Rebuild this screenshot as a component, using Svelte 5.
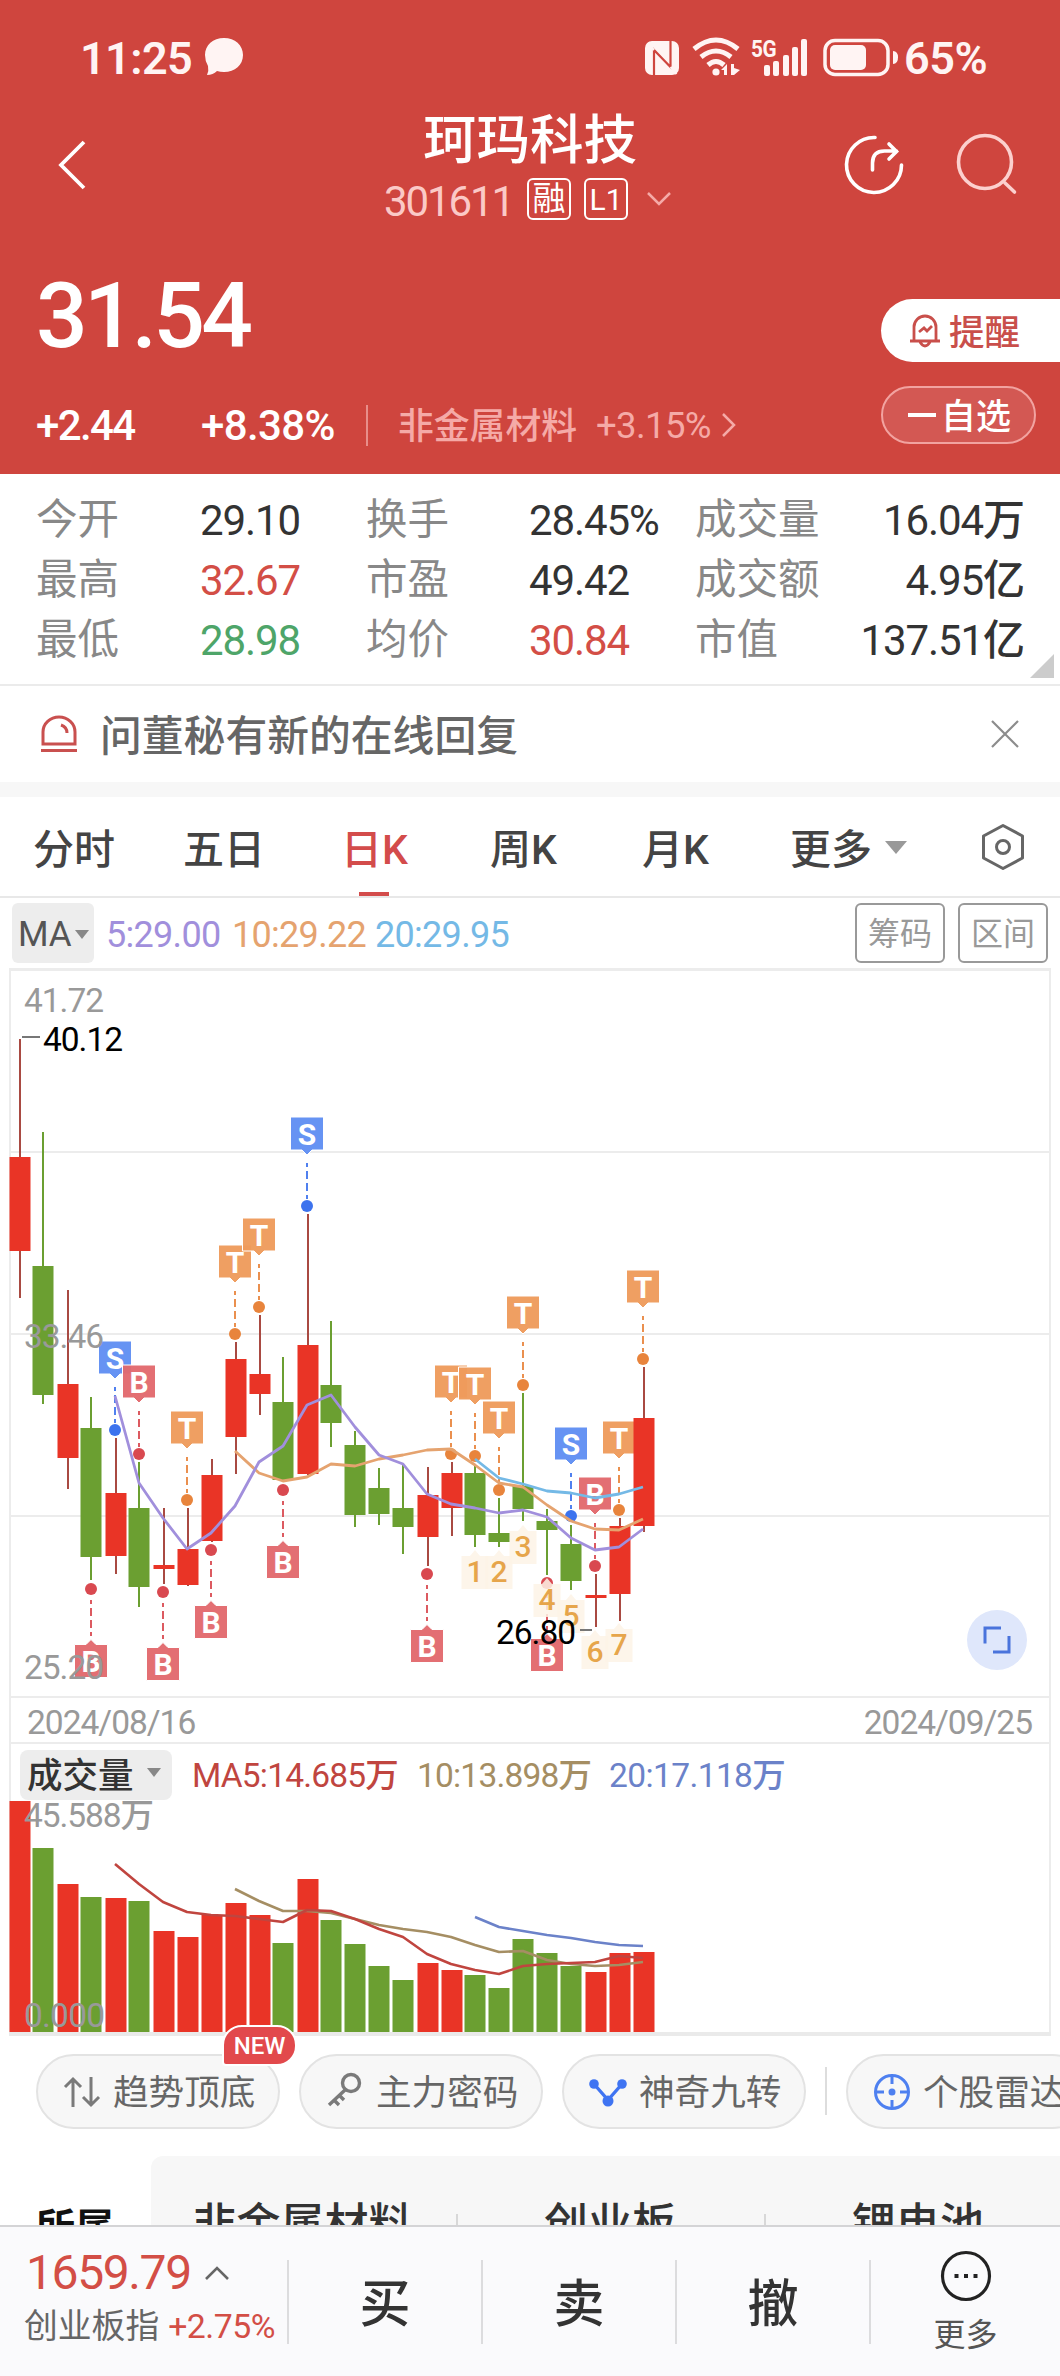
<script lang="ts">
	type Candle = [x: number, high: number, top: number, bottom: number, low: number, up: 0 | 1];
	type Point = [number, number];

	interface Marker {
		x: number;
		y: number;
		kind: 'S' | 'B' | 'T';
		below?: boolean;
	}

	const stats = [
		{ label: '今开', value: '29.10' },
		{ label: '换手', value: '28.45%' },
		{ label: '成交量', value: '16.04万' },
		{ label: '最高', value: '32.67', tone: 'rise' },
		{ label: '市盈', value: '49.42' },
		{ label: '成交额', value: '4.95亿' },
		{ label: '最低', value: '28.98', tone: 'fall' },
		{ label: '均价', value: '30.84', tone: 'rise' },
		{ label: '市值', value: '137.51亿' }
	];

	const tabs = ['分时', '五日', '日K', '周K', '月K'];
	let active = $state('日K');

	const candles: Candle[] = [
		[20, 1039, 1157, 1251, 1298, 1],
		[43, 1132, 1266, 1395, 1404, 0],
		[68, 1290, 1384, 1458, 1489, 1],
		[91, 1397, 1428, 1557, 1580, 0],
		[116, 1438, 1493, 1556, 1574, 1],
		[139, 1462, 1508, 1587, 1607, 0],
		[164, 1508, 1565, 1569, 1584, 1],
		[188, 1508, 1549, 1585, 1586, 1],
		[212, 1459, 1475, 1541, 1542, 1],
		[236, 1342, 1359, 1437, 1474, 1],
		[260, 1315, 1374, 1394, 1415, 1],
		[283, 1357, 1402, 1480, 1480, 0],
		[308, 1214, 1345, 1474, 1475, 1],
		[331, 1321, 1385, 1423, 1447, 0],
		[355, 1431, 1445, 1515, 1527, 0],
		[379, 1468, 1488, 1514, 1525, 0],
		[403, 1465, 1508, 1527, 1554, 0],
		[428, 1467, 1495, 1537, 1566, 1],
		[452, 1462, 1473, 1508, 1536, 1],
		[475, 1464, 1473, 1535, 1547, 0],
		[499, 1498, 1533, 1542, 1547, 0],
		[523, 1393, 1486, 1509, 1521, 0],
		[547, 1509, 1521, 1530, 1575, 0],
		[571, 1525, 1544, 1581, 1590, 0],
		[596, 1574, 1595, 1598, 1627, 1],
		[620, 1518, 1526, 1594, 1621, 1],
		[644, 1367, 1418, 1526, 1532, 1]
	];

	// Top edge of each volume bar
	const volumes = [
		1801, 1848, 1884, 1897, 1898, 1901, 1931, 1937, 1915, 1903, 1915, 1943, 1879, 1920,
		1944, 1966, 1980, 1963, 1970, 1975, 1988, 1939, 1953, 1966, 1972, 1953, 1952
	];
	const VOL_BASE = 2032;

	const STEP = 24;
	const series = (from: number, ys: number[]): Point[] => ys.map((y, i) => [from + i * STEP, y]);
	const toPoints = (pts: Point[]) => pts.map((p) => p.join(',')).join(' ');

	const ma5 = series(115, [
		1396, 1483, 1518, 1549, 1533, 1506, 1462, 1446, 1405, 1395, 1427, 1455, 1464, 1494,
		1504, 1508, 1513, 1510, 1517, 1538, 1550, 1547, 1529
	]);
	const ma10 = series(235, [
		1451, 1473, 1481, 1477, 1464, 1466, 1459, 1455, 1450, 1449, 1465, 1483, 1487, 1505,
		1521, 1529, 1530, 1519
	]);
	const ma20 = series(475, [1459, 1478, 1484, 1491, 1493, 1498, 1494, 1487]);

	const vol5 = series(115, [
		1864, 1884, 1902, 1912, 1915, 1916, 1919, 1922, 1910, 1911, 1919, 1929, 1937, 1954,
		1964, 1970, 1974, 1966, 1964, 1963, 1962, 1956, 1958
	]);
	const vol10 = series(235, [
		1889, 1901, 1911, 1911, 1913, 1919, 1925, 1929, 1932, 1937, 1945, 1952, 1951, 1960,
		1964, 1966, 1965, 1962
	]);
	const vol20 = series(475, [1917, 1927, 1931, 1935, 1938, 1942, 1945, 1946]);

	const markers: Marker[] = [
		{ x: 91, y: 1589, kind: 'B', below: true },
		{ x: 115, y: 1430, kind: 'S' },
		{ x: 139, y: 1454, kind: 'B' },
		{ x: 163, y: 1592, kind: 'B', below: true },
		{ x: 187, y: 1500, kind: 'T' },
		{ x: 211, y: 1550, kind: 'B', below: true },
		{ x: 235, y: 1334, kind: 'T' },
		{ x: 259, y: 1307, kind: 'T' },
		{ x: 283, y: 1490, kind: 'B', below: true },
		{ x: 307, y: 1206, kind: 'S' },
		{ x: 427, y: 1574, kind: 'B', below: true },
		{ x: 451, y: 1454, kind: 'T' },
		{ x: 475, y: 1456, kind: 'T' },
		{ x: 499, y: 1490, kind: 'T' },
		{ x: 523, y: 1385, kind: 'T' },
		{ x: 547, y: 1583, kind: 'B', below: true },
		{ x: 571, y: 1516, kind: 'S' },
		{ x: 595, y: 1566, kind: 'B' },
		{ x: 619, y: 1510, kind: 'T' },
		{ x: 643, y: 1359, kind: 'T' }
	];

	// Nine-turn counts, x and glyph top
	const turns: Point[] = [
		[475, 1561],
		[499, 1561],
		[523, 1536],
		[547, 1589],
		[571, 1605],
		[595, 1641],
		[619, 1634]
	];
</script>

<div class="page">
	<header class="hero">
		<div class="status">
			<span class="time">11:25</span>
			<svg class="bubble" width="40" height="38" viewBox="0 0 40 38">
				<path d="M20 0C31 0 39 7 39 17S31 34 20 34q-4 0-7-1-4 4-10 4 2-4 1-9Q1 23 1 17C1 7 9 0 20 0Z" fill="#fff4f3" />
			</svg>
			<svg class="signals" width="262" height="42" viewBox="644 36 262 42" fill="#fff4f3">
				<rect x="645" y="41" width="34" height="34" rx="7" />
				<path d="M654 76V50L670.500 67V40" fill="none" stroke="#cf453e" stroke-width="2.200" />
				<path d="M654 50L648 43M670.500 67l6 7" stroke="#fff4f3" stroke-width="2" />
				<g fill="none" stroke="#fff4f3" stroke-width="5">
					<path d="M694 49q22-18 44 0" />
					<path d="M701 57q15-12 30 0" />
					<path d="M708 65q8-7 16 0" />
				</g>
				<circle cx="716" cy="72" r="3.6" />
				<path d="M721 70l6-6v11h-3v-5zM731 64h3v4l6 2-6 5h-3z" />
				<text x="751" y="57" font-size="24" font-weight="700" textLength="25" lengthAdjust="spacingAndGlyphs">5G</text>
				<rect x="764" y="65" width="6" height="11" rx="2" />
				<rect x="773" y="61" width="6" height="15" rx="2" />
				<rect x="783" y="55" width="6" height="21" rx="2" />
				<rect x="792" y="47" width="6" height="29" rx="2" />
				<rect x="801" y="39" width="6" height="37" rx="2" />
				<rect x="825" y="40.500" width="63" height="34" rx="10" fill="none" stroke="#fff4f3" stroke-width="3.500" />
				<rect x="830" y="45" width="36" height="25" rx="5" />
				<path d="M893 51q5 0 5 6.500t-5 6.500z" />
			</svg>
			<span class="battery">65%</span>
		</div>

		<nav class="nav">
			<svg class="back" width="30" height="52" viewBox="0 0 30 52" fill="none" stroke="#fff" stroke-width="3.800">
				<path d="M28 3L5 26l23 23" />
			</svg>
			<div class="title">
				<h1>珂玛科技</h1>
				<div class="code">
					<span class="ticker">301611</span>
					<span class="badge">融</span>
					<span class="badge lvl">L1</span>
					<svg width="26" height="16" viewBox="0 0 26 16" fill="none" stroke="#f5aaa7" stroke-width="2.500">
						<path d="M2 2l11 11L24 2" />
					</svg>
				</div>
			</div>
			<svg class="tools" width="180" height="64" viewBox="842 132 180 64" fill="none" stroke-width="3.600" stroke-linecap="round">
				<path d="M875 137.500A27.500 27.500 0 1 0 901.500 165M872.500 170v-7q0-12 12-12h12M889 144l7.500 7.500-7.500 7.500" stroke="#fff" />
				<path d="M1005 183l9.500 9M1011.500 162a26.500 26.500 0 1 1-53 0 26.500 26.500 0 0 1 53 0" stroke="#fcd0ce" />
			</svg>
		</nav>

		<div class="quote">
			<div class="figures">
				<div class="price">31.54</div>
				<div class="change">
					<span class="diff">+2.44</span>
					<span class="pct">+8.38%</span>
					<i></i>
					<span class="industry">非金属材料</span>
					<span class="ind-pct">+3.15%</span>
					<svg width="16" height="28" viewBox="0 0 16 28" fill="none" stroke="#f5aaa7" stroke-width="2.500">
						<path d="M2 3l11 11L2 25" />
					</svg>
				</div>
			</div>
			<div class="actions">
				<button class="alert">
					<svg width="34" height="36" viewBox="0 0 34 36" fill="none" stroke="#c94f4b" stroke-width="2.800">
						<path d="M6 27V14a11 11 0 0 1 22 0v13M2 28h30M12 29q5 8 10 0M11 19l5-4 3 3 5-5" />
					</svg>
					<span>提醒</span>
				</button>
				<button class="watch"><i></i><span>自选</span></button>
			</div>
		</div>
	</header>

	<section class="stats">
		{#each stats as s}
			<span class="label">{s.label}</span>
			<span class="value {s.tone ?? ''}">{s.value}</span>
		{/each}
		<svg class="corner" width="24" height="24"><path d="M24 0v24H0z" fill="#ccc" /></svg>
	</section>

	<div class="notice">
		<svg width="36" height="38" viewBox="0 0 36 38" fill="none" stroke="#c9504f" stroke-width="3">
			<path d="M2 29V17a16 15 0 0 1 32 0v12zM0 35.500h36M20 10q6 2 6 8" />
		</svg>
		<span>问董秘有新的在线回复</span>
		<svg class="close" width="28" height="28" viewBox="0 0 28 28" stroke="#8c8c8c" stroke-width="2.200">
			<path d="M1 1l26 26M27 1L1 27" />
		</svg>
	</div>

	<div class="tabs">
		{#each tabs as tab}
			<button class:active={tab === active} onclick={() => (active = tab)}>{tab}</button>
		{/each}
		<button class="more">更多<i class="tri"></i></button>
		<svg width="44" height="48" viewBox="0 0 44 48" fill="none" stroke="#666" stroke-width="3">
			<path d="M22 2.500l19.500 10.500v22L22 45.500 2.500 35V13z" stroke-linejoin="round" />
			<circle cx="22" cy="24" r="6.500" />
		</svg>
	</div>

	<div class="legend">
		<button class="ma">MA<i class="tri"></i></button>
		<span class="l5">5:29.00</span>
		<span class="l10">10:29.22</span>
		<span class="l20">20:29.95</span>
		<button class="box first">筹码</button>
		<button class="box">区间</button>
	</div>

	<svg class="chart" width="1060" height="728" viewBox="0 968 1060 728">
		<g stroke="#ececec" stroke-width="2">
			<path d="M9 969.500H1051" stroke-width="3" />
			<path d="M10 970V1700M1050 970V1700M10 1152H1050M10 1334H1050M10 1516H1050" fill="none" />
		</g>

		{#each markers as m}
			<g class="marker {m.kind}">
				<path class="dash" d={m.below ? `M${m.x} ${m.y + 11}v36` : `M${m.x} ${m.y - 43}v36`} />
				<circle cx={m.x} cy={m.y} r="6" />
				{#if m.below}
					<path class="tag" d="M{m.x - 16.5} {m.y + 55.500}h11.500l5-5 5 5h11.500v33h-33z" />
					<text x={m.x} y={m.y + 82.5}>{m.kind}</text>
				{:else}
					<path class="tag" d="M{m.x - 16.5} {m.y - 89}h33v33h-11.500l-5 5-5-5h-11.500z" />
					<text x={m.x} y={m.y - 61.5}>{m.kind}</text>
				{/if}
			</g>
		{/each}

		{#each turns as [x, y], i}
			<g class="turn">
				<path d="M{x - 13.5} {y - 5}h8.500l5-6 5 6h8.500v33h-27z" />
				<text {x} y={y + 21}>{i + 1}</text>
			</g>
		{/each}

		{#each candles as [x, high, top, bottom, low, up]}
			<g class={up ? 'up' : 'down'}>
				<path class="wick" d="M{x} {high}V{low}" />
				<rect x={x - 10.5} y={top} width="21" height={bottom - top} />
			</g>
		{/each}

		<g class="lines">
			<polyline points={toPoints(ma20)} stroke="#74b9e6" />
			<polyline points={toPoints(ma10)} stroke="#e5a36f" />
			<polyline points={toPoints(ma5)} stroke="#a18fdc" />
		</g>

		<g class="axis">
			<text x="24" y="1012" textLength="80">41.72</text>
			<text x="24" y="1348" textLength="80">33.46</text>
			<text x="24" y="1679" textLength="80">25.20</text>
		</g>
		<g class="axis peak">
			<text x="43" y="1051" textLength="80">40.12</text>
			<text x="496" y="1644" textLength="80">26.80</text>
		</g>
		<path d="M22 1037H40M580 1630H592" stroke="#777" stroke-width="2" />

		<circle cx="997" cy="1640" r="30" fill="#dfe7fb" />
		<path d="M1001 1628H985V1643.500M1009 1636V1652H993" fill="none" stroke="#4a74dc" stroke-width="3" />
	</svg>

	<div class="dates">
		<span>2024/08/16</span>
		<span>2024/09/25</span>
	</div>

	<div class="vol-head">
		<button>成交量<i class="tri"></i></button>
		<span class="v5">MA5:14.685万</span>
		<span class="v10">10:13.898万</span>
		<span class="v20">20:17.118万</span>
	</div>

	<svg class="chart" width="1060" height="236" viewBox="0 1800 1060 236">
		<path d="M10 1800V2034M1050 1800V2034" stroke="#ececec" stroke-width="2" />
		<path d="M9 2034H1051" stroke="#eaeaea" stroke-width="4" />
		{#each volumes as top, i}
			<rect
				class={candles[i][5] ? 'up' : 'down'}
				x={candles[i][0] - 10.5}
				y={top}
				width="21"
				height={VOL_BASE - top}
			/>
		{/each}
		<g class="lines vol">
			<polyline points={toPoints(vol10)} stroke="#a58e63" />
			<polyline points={toPoints(vol5)} stroke="#c0453f" />
			<polyline points={toPoints(vol20)} stroke="#6b82c9" />
		</g>
		<g class="axis">
			<text x="24" y="1827" textLength="130">45.588万</text>
			<text x="24" y="2027" textLength="81">0.000</text>
		</g>
	</svg>

	<div class="chips">
		<button>
			<svg width="38" height="32" viewBox="0 0 38 32" fill="none" stroke="#7a7a7a" stroke-width="3">
				<path d="M10 31V3M2 11l8-8 8 8M28 1v28M20 21l8 8 8-8" />
			</svg>
			<span>趋势顶底</span>
			<b class="new">NEW</b>
		</button>
		<button>
			<svg class="key" width="38" height="36" viewBox="0 0 38 36" fill="none" stroke="#7a7a7a" stroke-width="3.400">
				<circle cx="25" cy="11" r="8.500" />
				<path d="M19 18L3 33M8 28l5 5M13 23l5 5" />
			</svg>
			<span>主力密码</span>
		</button>
		<button>
			<svg width="38" height="32" viewBox="0 0 38 32" fill="#3f74f2">
				<path d="M5 8l14 16L33 8" fill="none" stroke="#3f74f2" stroke-width="3.400" />
				<circle cx="5" cy="8" r="4.800" />
				<circle cx="33" cy="8" r="4.800" />
				<circle cx="19" cy="25" r="5.500" />
			</svg>
			<span>神奇九转</span>
		</button>
		<i></i>
		<button class="radar">
			<svg width="38" height="38" viewBox="0 0 38 38" fill="none" stroke="#4e80f0" stroke-width="3">
				<circle cx="19" cy="19" r="16.500" />
				<path d="M19 2v9M19 27v9M2 19h9M27 19h9" />
				<circle cx="19" cy="19" r="2" fill="#4e80f0" />
			</svg>
			<span>个股雷达</span>
		</button>
	</div>

	<div class="sectors">
		<span class="own">所属</span>
		<div class="list">
			<span>非金属材料</span>
			<i></i>
			<span>创业板</span>
			<i></i>
			<span>锂电池</span>
		</div>
	</div>

	<footer class="trade">
		<div class="index">
			<div class="level">
				1659.79
				<svg width="26" height="16" viewBox="0 0 26 16" fill="none" stroke="#666" stroke-width="2.600">
					<path d="M2 14L13 3l11 11" />
				</svg>
			</div>
			<div class="name">创业板指<span>+2.75%</span></div>
		</div>
		<button>买</button>
		<button>卖</button>
		<button>撤</button>
		<div class="menu">
			<svg width="52" height="52" viewBox="0 0 52 52" fill="none" stroke="#222" stroke-width="3.200">
				<circle cx="26" cy="26" r="23.500" />
				<path d="M14.500 26h4M24 26h4M33.500 26h4" stroke-width="4" />
			</svg>
			更多
		</div>
	</footer>
</div>

<style>
	:global(body) {
		background: #fff;
	}

	.page {
		width: 1060px;
		height: 2376px;
		display: flex;
		flex-direction: column;
		overflow: hidden;
		background: #fff;
		font-family: Roboto, 'Noto Sans CJK SC', sans-serif;
		white-space: nowrap;
	}

	.page * {
		box-sizing: border-box;
		flex-shrink: 0;
	}

	svg {
		display: block;
	}

	button {
		padding: 0;
		border: 0;
		background: none;
		color: inherit;
		font: inherit;
		text-align: left;
	}

	.tri {
		border: 7px solid transparent;
		border-top: 9px solid #888;
		border-bottom: 0;
	}

	/* --- Header --- */

	.hero {
		height: 474px;
		background: #cf453e;
		color: #fff;
	}

	.status {
		height: 114px;
		padding-left: 80px;
		display: flex;
		align-items: center;
		color: #fff4f3;
		font-size: 45px;
		font-weight: 600;
		line-height: 52px;
		letter-spacing: -0.6px;
	}

	.time {
		width: 124px;
		margin-top: 3px;
	}

	.signals {
		margin-left: 400px;
	}

	.battery {
		margin: 3px 0 0 -2px;
		letter-spacing: -0.4px;
	}

	.nav {
		height: 114px;
		display: grid;
		grid-template-columns: 300px 1fr 300px;
	}

	.back {
		margin: 25px 0 0 56px;
	}

	.title {
		display: flex;
		flex-direction: column;
		align-items: center;
	}

	h1 {
		margin: 0;
		font-size: 53.6px;
		font-weight: 500;
		line-height: 54px;
	}

	.code {
		margin: 9px 4px 0 0;
		height: 44px;
		display: flex;
		align-items: center;
	}

	.ticker {
		margin: 4px 14px 0 0;
		color: #fbc9c6;
		font-size: 42px;
		letter-spacing: -2.1px;
	}

	.badge {
		width: 44px;
		height: 42px;
		margin-right: 13px;
		border: 2px solid #fff;
		border-radius: 6px;
		font-size: 33px;
		line-height: 37px;
		text-align: center;
	}

	.badge.lvl {
		margin-right: 18px;
		font-size: 30px;
		line-height: 39px;
	}

	.tools {
		margin: 18px 0 0 82px;
	}

	.quote {
		display: flex;
		justify-content: space-between;
	}

	.figures {
		padding-left: 36px;
	}

	.price {
		height: 172px;
		font-size: 91px;
		font-weight: 500;
		line-height: 176px;
		letter-spacing: -3.8px;
	}

	.change {
		height: 50px;
		display: flex;
		align-items: center;
		font-size: 42px;
		font-weight: 500;
		letter-spacing: -1.6px;
	}

	.diff {
		width: 165px;
	}

	.pct {
		width: 165px;
		letter-spacing: -0.6px;
	}

	.change i {
		width: 2px;
		height: 41px;
		margin-right: 30px;
		background: #e88e8a;
	}

	.industry {
		width: 198px;
		padding-bottom: 4px;
		color: #f5aaa7;
		font-size: 35.8px;
		letter-spacing: 0;
	}

	.ind-pct {
		width: 125px;
		color: #f5aaa7;
		font-size: 36.5px;
		font-weight: 400;
		letter-spacing: -0.6px;
	}

	.actions {
		width: 179px;
		padding-top: 71px;
		display: flex;
		flex-direction: column;
		gap: 24px;
	}

	.alert {
		height: 63px;
		padding-left: 27px;
		display: flex;
		align-items: center;
		gap: 7px;
		border-radius: 32px 0 0 32px;
		background: #fff;
		color: #c94f4b;
		font-size: 35.5px;
		font-weight: 500;
	}

	.alert span,
	.watch span {
		padding-bottom: 3px;
	}

	.watch {
		width: 155px;
		height: 58px;
		padding-left: 25px;
		display: flex;
		align-items: center;
		gap: 5px;
		border: 2px solid #f2a3a0;
		border-radius: 29px;
		background: #d35853;
		font-size: 35px;
		font-weight: 500;
	}

	.watch i {
		width: 28px;
		height: 4px;
		background: #fff;
	}

	/* --- Stats --- */

	.stats {
		position: relative;
		height: 212px;
		padding: 16px 36px 0;
		display: grid;
		grid-template-columns: 165px 165px 164px 165px 120px 1fr;
		grid-auto-rows: 60px;
		border-bottom: 2px solid #ebebeb;
		color: #333;
		font-size: 41.5px;
		line-height: 60px;
	}

	.label {
		color: #888;
	}

	.value {
		padding-top: 1px;
		margin-left: -1px;
		font-size: 42px;
		font-weight: 450;
		letter-spacing: -1.1px;
	}

	.value:nth-of-type(6n) {
		text-align: right;
	}

	.rise {
		color: #d34e46;
	}

	.fall {
		color: #4ea569;
	}

	.corner {
		position: absolute;
		right: 6px;
		bottom: 6px;
	}

	/* --- Notice --- */

	.notice {
		height: 111px;
		padding: 0 41px 0 41px;
		display: flex;
		align-items: center;
		border-bottom: 15px solid #f7f7f7;
		color: #666;
		font-size: 41.8px;
		font-weight: 500;
	}

	.notice span {
		margin-left: 23px;
		padding-bottom: 2px;
	}

	.close {
		margin-left: auto;
	}

	/* --- Tabs --- */

	.tabs {
		height: 101px;
		padding-left: 33px;
		display: grid;
		grid-template-columns: 150px 158px 149px 152px 148px 191px 1fr;
		justify-items: start;
		align-items: center;
		border-bottom: 2px solid #e8e8e8;
		color: #444;
		font-size: 41px;
		font-weight: 500;
	}

	.tabs button {
		height: 99px;
		padding-bottom: 2px;
	}

	.tabs .active {
		color: #d34c4b;
		background: linear-gradient(#d34c4b, #d34c4b) center bottom / 30px 4px no-repeat;
	}

	.tabs .more {
		display: flex;
		align-items: center;
		gap: 13px;
	}

	.more .tri {
		margin-top: 3px;
		border-width: 13px 11px 0;
		border-top-color: #999;
	}

	/* --- MA legend --- */

	.legend {
		height: 70px;
		padding: 0 12px;
		display: flex;
		align-items: center;
		font-size: 36px;
		letter-spacing: -0.7px;
	}

	.legend span {
		padding-top: 3px;
		font-weight: 450;
	}

	.ma {
		width: 82px;
		height: 60px;
		padding: 3px 0 0 6px;
		display: flex;
		align-items: center;
		gap: 3px;
		border-radius: 6px;
		background: #ededed;
		color: #555;
		font-size: 35px;
	}

	.l5 {
		width: 126px;
		margin-left: 12px;
		color: #a18fdc;
	}

	.l10 {
		width: 143px;
		color: #e5a36f;
	}

	.l20 {
		color: #74b9e6;
	}

	.box {
		width: 90px;
		height: 60px;
		margin-left: 13px;
		padding-bottom: 4px;
		border: 2px solid #999;
		border-radius: 6px;
		color: #999;
		font-size: 32px;
		letter-spacing: 0;
		text-align: center;
	}

	.box.first {
		margin-left: auto;
	}

	/* --- Charts --- */

	.chart {
		font-family: Roboto, 'Noto Sans CJK SC', sans-serif;
	}

	.up {
		fill: #e93426;
		stroke: #a94a42;
	}

	.down {
		fill: #6b9f31;
		stroke: #6b9f31;
	}

	.chart rect {
		stroke: none;
	}

	.wick {
		stroke-width: 2;
	}

	.lines {
		fill: none;
		stroke-width: 2.8;
		stroke-linejoin: round;
	}

	.lines.vol {
		stroke-width: 2.6;
	}

	.S {
		--solid: #3d73ee;
		--tag: #608ff3;
	}

	.B {
		--solid: #d94950;
		--tag: #e2696d;
	}

	.T {
		--solid: #e8843c;
		--tag: #ee9b5c;
	}

	.marker circle {
		fill: var(--solid);
	}

	.dash {
		stroke: var(--solid);
		stroke-width: 1.8;
		stroke-dasharray: 8 4;
		stroke-dashoffset: 4;
	}

	.tag {
		fill: var(--tag);
		stroke: #fff;
		stroke-width: 1;
		fill-opacity: 0.96;
	}

	.marker text {
		fill: #fff;
		font-size: 30px;
		font-weight: 700;
		text-anchor: middle;
	}

	.turn path {
		fill: #fdf3e6;
		fill-opacity: 0.85;
	}

	.turn text {
		fill: #e6a54b;
		font-size: 30px;
		font-weight: 500;
		text-anchor: middle;
	}

	.axis {
		fill: #999;
		font-size: 33.5px;
		font-weight: 450;
	}

	.axis.peak {
		fill: #000;
	}

	.dates {
		height: 48px;
		margin: 0 9px;
		padding: 2px 17px 0 16px;
		display: flex;
		justify-content: space-between;
		border: 2px solid #ececec;
		color: #999;
		font-size: 33.5px;
		font-weight: 450;
		line-height: 45px;
		letter-spacing: -1px;
	}

	.vol-head {
		height: 56px;
		margin: 0 9px;
		padding-left: 9px;
		display: flex;
		align-items: center;
		border: 2px solid #ececec;
		border-width: 0 2px;
		font-size: 33.5px;
		font-weight: 450;
		letter-spacing: -0.8px;
	}

	.vol-head button {
		width: 152px;
		height: 50px;
		margin-right: 20px;
		padding: 0 0 5px 7px;
		align-self: flex-end;
		display: flex;
		align-items: center;
		gap: 13px;
		border-radius: 8px;
		background: #ededed;
		color: #333;
		font-size: 35.5px;
		letter-spacing: 0;
	}

	.vol-head span {
		padding-top: 1px;
	}

	.v5 {
		width: 225px;
		color: #c0453f;
	}

	.v10 {
		width: 192px;
		color: #a58e63;
	}

	.v20 {
		color: #6b82c9;
		letter-spacing: -0.6px;
	}

	/* --- Feature chips --- */

	.chips {
		height: 120px;
		padding: 18px 0 0 36px;
		display: flex;
		gap: 19px;
	}

	.chips button {
		position: relative;
		width: 244px;
		height: 75px;
		padding-left: 25px;
		display: flex;
		align-items: center;
		gap: 12px;
		border: 2px solid #e3e3e3;
		border-radius: 38px;
		background: #f7f7f7;
		color: #666;
		font-size: 35.6px;
	}

	.chips span {
		padding-bottom: 5px;
	}

	.chips .key {
		margin-top: -3px;
	}

	.chips > i {
		width: 2px;
		height: 48px;
		margin-top: 13px;
		background: #ddd;
	}

	.new {
		position: absolute;
		left: 184px;
		top: -31px;
		width: 75px;
		height: 41px;
		border: 2px solid #fff;
		border-radius: 20px 20px 20px 4px;
		background: #e2494c;
		color: #fff;
		font-size: 24px;
		font-weight: 500;
		line-height: 39px;
		text-align: center;
	}

	/* --- Sectors --- */

	.sectors {
		height: 69px;
		display: flex;
		overflow: hidden;
		font-weight: 500;
	}

	.own {
		width: 151px;
		padding: 44px 0 0 36px;
		color: #111;
		font-size: 39px;
		font-weight: 700;
		line-height: 56px;
	}

	.list {
		width: 909px;
		height: 130px;
		display: grid;
		grid-template-columns: 305px 2px 306px 2px 306px;
		border-radius: 12px 0 0 0;
		background: #f7f7f7;
		color: #333;
		font-size: 44px;
		line-height: 138px;
		text-align: center;
	}

	.list span {
		margin-left: -2px;
	}

	.list i {
		height: 40px;
		margin-top: 58px;
		background: #d8d8d8;
	}

	/* --- Trade bar --- */

	.trade {
		height: 151px;
		display: grid;
		grid-template-columns: 289px 194px 194px 194px 189px;
		align-items: center;
		border-top: 2px solid #d4d4d6;
		background: #fafafc;
		color: #333;
	}

	.index {
		height: 84px;
		padding: 0 0 8px 26px;
		display: flex;
		flex-direction: column;
		justify-content: center;
		border-right: 2px solid #dcdcde;
	}

	.level {
		display: flex;
		align-items: center;
		gap: 13px;
		color: #d34e46;
		font-size: 48px;
		font-weight: 450;
		line-height: 58px;
		letter-spacing: -1.4px;
	}

	.name {
		margin-left: -2px;
		color: #666;
		font-size: 33.8px;
		line-height: 50px;
	}

	.name span {
		margin-left: 9px;
		color: #d34e46;
		letter-spacing: -0.5px;
	}

	.trade button {
		height: 84px;
		padding-bottom: 4px;
		border-right: 2px solid #dcdcde;
		font-size: 51px;
		font-weight: 500;
		text-align: center;
	}

	.menu {
		display: flex;
		flex-direction: column;
		align-items: center;
		gap: 10px;
		padding-top: 4px;
		color: #555;
		font-size: 32px;
		line-height: 46px;
	}
</style>
